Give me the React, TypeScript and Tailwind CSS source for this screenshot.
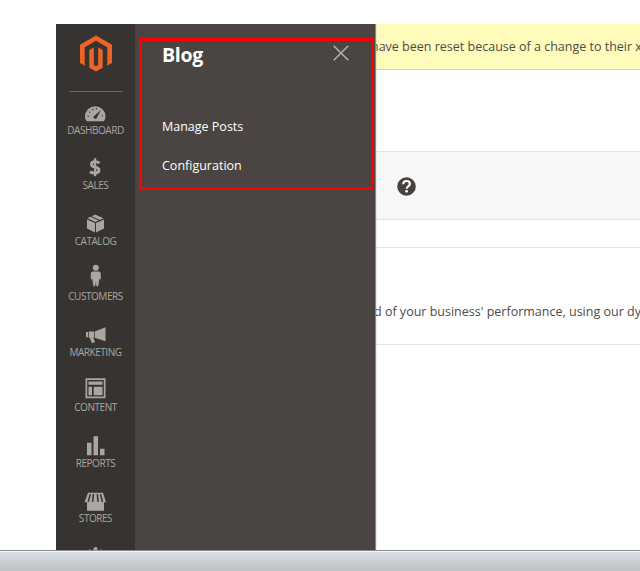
import type { ReactNode } from "react";

const items: { label: string; icon: ReactNode }[] = [
  {
    label: "DASHBOARD",
    icon: (
      <>
        <path d="M3.4 20C2 18.500 1.500 17 1.500 15.200A10.250 10.200 0 0 1 22 15.200C22 17 21.500 18.500 20.100 20Z" />
        <path d="M17.500 8.800L13 17.300A2 2 0 0 1 10 15.200Z" fill="#373330" />
        <g fill="#373330">
          <circle cx="4.700" cy="15" r=".7" />
          <circle cx="6.300" cy="11" r=".7" />
          <circle cx="9.300" cy="8.300" r=".7" />
          <circle cx="13" cy="7.500" r=".7" />
          <circle cx="18.700" cy="14.500" r=".7" />
        </g>
      </>
    ),
  },
  {
    label: "SALES",
    icon: (
      <g fill="none" stroke="#aaa6a0">
        <path d="M16 7C14.500 5.700 12.500 5.200 10.600 5.500C7.300 6.100 7.200 9.500 10.100 10.400L13 11.300C16.700 12.600 16 16.300 12.500 16.800C10.400 17.100 8.200 16.600 6.500 15.500" strokeWidth="2.900" />
        <path d="M11.600 2V20" strokeWidth="2.200" />
      </g>
    ),
  },
  {
    label: "CATALOG",
    icon: (
      <>
        <path d="M3.500 7.200L11.500 10.700V20.200L3.500 16.300ZM12.500 10.700L20.500 7.200V16.300L12.500 20.200Z" />
        <path d="M3.900 6.100L7 4.600L15 8.400L12 9.700ZM8.200 4L11.500 2.300L20.100 6.100L16.300 7.800Z" />
      </>
    ),
  },
  {
    label: "CUSTOMERS",
    icon: (
      <>
        <circle cx="12.300" cy=".6" r="3" />
        <path d="M9.200 4.200H15.400Q17.300 4.400 17.300 6.500V12H15.600V14L14.700 19H12.900L12.300 14.500L11.700 19H9.900L9 14V12H7.300V6.500Q7.300 4.400 9.200 4.200Z" />
      </>
    ),
  },
  {
    label: "MARKETING",
    icon: (
      <>
        <path d="M2.500 8.700H4.500V14H2.500ZM5.300 8.400H10.500V14.500H5.300ZM11.200 8.200L22 4V18L11.200 14.500Z" />
        <path d="M6 14H9.500L11.500 18.800L8.500 20Z" />
      </>
    ),
  },
  {
    label: "CONTENT",
    icon: (
      <>
        <path d="M2 0H22V20H2ZM3.700 1.700V18.300H20.300V1.700Z" fillRule="evenodd" />
        <path d="M5 3.200H19V6.500H5ZM5 8.500H8.500V17H5ZM10.200 8.500H19V17H10.200Z" />
      </>
    ),
  },
  {
    label: "REPORTS",
    icon: <path d="M3.500 8.500H8V21H3.500ZM10 2H14.500V21H10ZM16.500 14.500H21V21H16.500Z" />,
  },
  {
    label: "STORES",
    icon: (
      <>
        <path d="M4.500 3.500H19.500L22.500 13H20.500V21.500H3.500V13H1Z" />
        <path d="M6.800 5L4.700 12.700M10 5L9 12.700M13.800 5L14.600 12.700M17 5L19 12.700" stroke="#373330" strokeWidth="1.500" />
      </>
    ),
  },
];

function Sidebar() {
  return (
    <nav className="flex w-[79px] shrink-0 flex-col items-center overflow-hidden bg-[#373330]">
      <svg className="mt-[11px] h-[37px] w-[34px] shrink-0" viewBox="0 0 34 37" fill="#ee6426">
        <path d="M17 .5L33 9.700V28L28.300 30.700V12.300L17 5.800L5.700 12.300V30.700L1 28V9.700Z" />
        <path d="M10.300 15L14.800 12.400V30L17 31.300L19.200 30V12.400L23.700 15V32.700L17 36.500L10.300 32.700Z" />
      </svg>
      <hr className="mt-[19px] w-[54px] shrink-0 border-t border-[#6a6662]" />
      <ul className="mt-[8.500px] w-full">
        {items.map((item) => (
          <li key={item.label} className="flex h-[55.5px] flex-col items-center text-[#aaa6a0]">
            <svg className="h-[22px] w-6 shrink-0 overflow-visible" viewBox="0.5 -0.2 24 22" fill="currentColor">
              {item.icon}
            </svg>
            <span className="text-[10px] leading-[14px] tracking-[-0.45px]">{item.label}</span>
          </li>
        ))}
        <li className="flex justify-center">
          <svg className="h-[22px] w-6 text-[#aaa6a0]" viewBox="0.5 -0.2 24 22" fill="currentColor">
            <path d="M10.500 2H13.500L14 4.500L16 5.300L18 4L20 6L19 9H5L4 6L6 4L8.500 5.300L10 4.500Z" />
          </svg>
        </li>
      </ul>
    </nav>
  );
}

function Submenu() {
  return (
    <section className="relative z-10 w-[240px] shrink-0 bg-[#4a4542] pl-[27px] text-white shadow-[1px_0_1px_#888]">
      <div className="flex items-center pt-[15px]">
        <h2 className="text-[19.500px] leading-[31px] font-bold tracking-[-0.3px]">Blog</h2>
        <svg className="mr-[26px] mb-[3px] ml-auto h-4 w-4" viewBox="0 0 16 16" stroke="#b5b0ab" strokeWidth="1.500">
          <path d="M.7 .7L15.300 15.300M15.300 .7L.7 15.300" />
        </svg>
      </div>
      <ul className="mt-[46px] text-[12.500px] leading-5 font-medium">
        <li className="pt-px">Manage Posts</li>
        <li className="mt-[19px]">Configuration</li>
      </ul>
      <div className="absolute top-[14px] left-[4px] h-[152px] w-[235px] border-[3px] border-[#fe0000]" />
    </section>
  );
}

function Content() {
  return (
    <main className="min-w-0 flex-1 overflow-hidden text-[12.500px] whitespace-nowrap text-[#504a46]">
      <div className="h-[46px] border-b border-[#d8d5ba] bg-[#fffbbb] leading-[45px]">
        <span className="-ml-[4px]">have been reset because of a change to their x</span>
      </div>
      <div className="mt-[81px] flex h-[69px] items-center border-y border-[#e3e3e3] bg-[#f8f8f8] pt-px pl-[22px]">
        <svg className="h-[19px] w-[19px]" viewBox="0 0 19 19" fill="none">
          <circle cx="9.500" cy="9.500" r="9.300" fill="#48413d" />
          <path d="M6.200 7.200C6.200 5 7.700 4 9.500 4C11.500 4 12.900 5.200 12.900 6.900C12.900 9 9.700 9.100 9.700 11.700" stroke="white" strokeWidth="2.200" />
          <circle cx="9.600" cy="14.300" r="1.400" fill="white" />
        </svg>
      </div>
      <div className="mt-[27px] h-[98px] border-y border-[#e3e3e3] pt-[54px] leading-5">
        <span className="-ml-[1px]">d of your business&apos; performance, using our dy</span>
      </div>
    </main>
  );
}

export default function App() {
  return (
    <div className="flex h-[571px] w-[640px] flex-col overflow-hidden bg-white font-['Open_Sans',sans-serif]">
      <div className="mt-6 ml-14 flex h-[526px] shrink-0 overflow-hidden">
        <Sidebar />
        <Submenu />
        <Content />
      </div>
      <footer className="h-[21px] shrink-0 border-t border-[#858b96] bg-linear-to-b from-[#dce0e4] to-[#bdc1c5] shadow-[inset_0_1px_#f4f6f8]" />
    </div>
  );
}
